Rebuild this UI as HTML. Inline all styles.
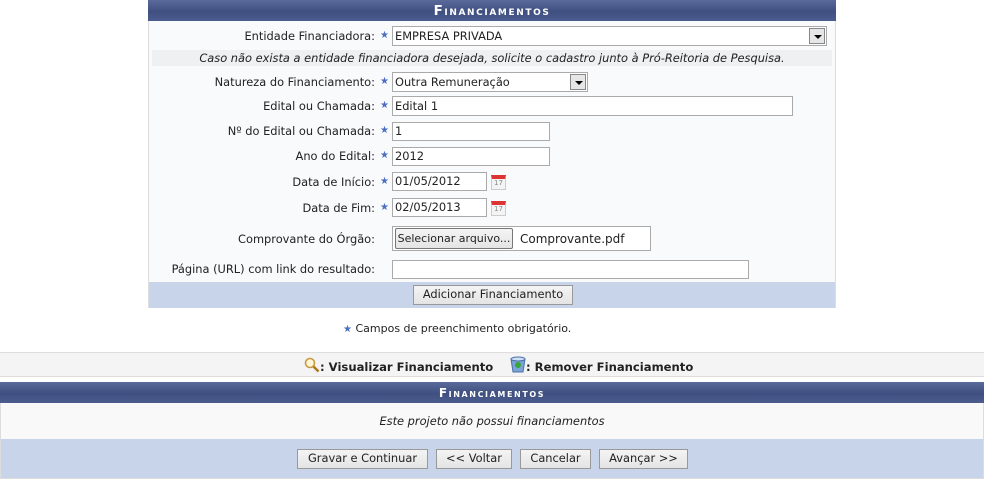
<!DOCTYPE html>
<html><head><meta charset="utf-8"><style>
*{margin:0;padding:0;box-sizing:border-box}
body{width:984px;height:479px;position:relative;background:#fff;font-family:"DejaVu Sans",Verdana,sans-serif;font-size:11.4px;color:#222;overflow:hidden}
.a{position:absolute}
.hdr{background:linear-gradient(#5a6a9a,#3f4f80 55%,#4c5c8e);color:#fff;font-weight:bold;text-align:center;font-variant:small-caps;letter-spacing:1.6px;font-size:13.5px}
.lbl{position:absolute;right:609px;white-space:nowrap;text-align:right}
.star{position:absolute;left:380px;color:#4a6fc2;font-size:10px}
.in{position:absolute;left:392px;background:#fff;border:1px solid #aaa;padding-left:2px;line-height:16px;white-space:nowrap}
.btn{position:absolute;background:linear-gradient(#f4f4f4,#e4e4e4);border:1px solid #999;text-align:center;line-height:17px;white-space:nowrap}
.arr{position:absolute;top:1px;right:1px;width:16px;height:16px;background:#e6e6e6;border:1px solid #888}
.arr:after{content:"";position:absolute;left:4px;top:6px;border-left:4px solid transparent;border-right:4px solid transparent;border-top:4px solid #000}
.cal{position:absolute;left:491px;width:15px;height:15px;background:#f4f4f4;border:1px solid #ccc;border-top:4px solid #d33}
.cal:after{content:"17";position:absolute;left:2px;top:0;font-size:7px;color:#888}
</style></head><body>
<div class="a" style="left:148px;top:0;width:688px;height:308px;background:#f9fafc;border-left:1px solid #ddd;border-right:1px solid #ddd"></div>
<div class="a hdr" style="left:148px;top:0;width:688px;height:21px;line-height:23px">Financiamentos</div>

<div class="lbl" style="top:29px">Entidade Financiadora:</div><div class="star" style="top:30px">★</div>
<div class="in" style="top:26px;width:435px;height:20px;line-height:18px">EMPRESA PRIVADA<span class="arr"></span></div>

<div class="a" style="left:152px;top:50px;width:680px;height:16px;background:#eef0f2;text-align:center;font-style:italic;line-height:17px">Caso não exista a entidade financiadora desejada, solicite o cadastro junto à Pró-Reitoria de Pesquisa.</div>

<div class="lbl" style="top:75px">Natureza do Financiamento:</div><div class="star" style="top:76px">★</div>
<div class="in" style="top:72px;width:196px;height:20px;line-height:18px">Outra Remuneração<span class="arr"></span></div>

<div class="lbl" style="top:99px">Edital ou Chamada:</div><div class="star" style="top:100px">★</div>
<div class="in" style="top:96px;width:401px;height:20px;line-height:18px">Edital 1</div>

<div class="lbl" style="top:124px">Nº do Edital ou Chamada:</div><div class="star" style="top:125px">★</div>
<div class="in" style="top:122px;width:158px;height:19px">1</div>

<div class="lbl" style="top:149px">Ano do Edital:</div><div class="star" style="top:150px">★</div>
<div class="in" style="top:147px;width:158px;height:19px">2012</div>

<div class="lbl" style="top:175px">Data de Início:</div><div class="star" style="top:176px">★</div>
<div class="in" style="top:172px;width:95px;height:19px">01/05/2012</div><div class="cal" style="top:175px"></div>

<div class="lbl" style="top:201px">Data de Fim:</div><div class="star" style="top:202px">★</div>
<div class="in" style="top:198px;width:95px;height:19px">02/05/2013</div><div class="cal" style="top:201px"></div>

<div class="lbl" style="top:232px">Comprovante do Órgão:</div>
<div class="in" style="top:226px;width:259px;height:25px;border-color:#aaa"></div>
<div class="btn" style="left:395px;top:228px;width:118px;height:21px;line-height:19px;border-color:#777;border-radius:2px;font-size:11px">Selecionar arquivo...</div>
<div class="a" style="left:520px;top:232px;font-size:12px">Comprovante.pdf</div>

<div class="lbl" style="top:262px">Página (URL) com link do resultado:</div>
<div class="in" style="top:260px;width:357px;height:19px"></div>

<div class="a" style="left:149px;top:282px;width:686px;height:26px;background:#c8d4ea"></div>
<div class="btn" style="left:413px;top:285px;width:160px;height:20px">Adicionar Financiamento</div>

<div class="a" style="left:343px;top:322px;font-size:11px"><span style="color:#4a6fc2;font-size:10px">★</span> Campos de preenchimento obrigatório.</div>

<div class="a" style="left:0;top:352px;width:984px;height:25px;background:#f4f4f4;border-top:1px solid #ddd;border-bottom:1px solid #ddd"></div>
<div class="a" style="left:304px;top:357px;width:15px;height:15px">
<svg width="16" height="16"><circle cx="6" cy="6" r="4.5" fill="#fff6d8" stroke="#c89a40" stroke-width="1.6"/><line x1="9.5" y1="9.5" x2="14.5" y2="14.5" stroke="#b07820" stroke-width="2.6"/></svg></div>
<div class="a" style="left:320px;top:360px;font-weight:bold;font-size:11.6px">: Visualizar Financiamento</div>
<div class="a" style="left:510px;top:356px;width:16px;height:17px">
<svg width="16" height="17"><path d="M1 3h14l-2 13H3z" fill="#7aa4d8" stroke="#4a6fa8"/><ellipse cx="8" cy="3" rx="7" ry="2" fill="#cfe0f4" stroke="#4a6fa8"/><circle cx="8" cy="9" r="3" fill="#3aa43a"/></svg></div>
<div class="a" style="left:526px;top:360px;font-weight:bold;font-size:11.6px">: Remover Financiamento</div>

<div class="a hdr" style="left:0;top:382px;width:984px;height:21px;line-height:22px;font-size:12px">Financiamentos</div>
<div class="a" style="left:0;top:403px;width:984px;height:76px;border-left:1px solid #ddd;border-right:1px solid #ddd;border-bottom:1px solid #ddd;background:#f9f9f9"></div>
<div class="a" style="left:0;top:414px;width:984px;text-align:center;font-style:italic">Este projeto não possui financiamentos</div>
<div class="a" style="left:1px;top:439px;width:982px;height:39px;background:#c8d4ea"></div>
<div class="btn" style="left:297px;top:449px;width:131px;height:20px">Gravar e Continuar</div>
<div class="btn" style="left:436px;top:449px;width:76px;height:20px">&lt;&lt; Voltar</div>
<div class="btn" style="left:520px;top:449px;width:71px;height:20px">Cancelar</div>
<div class="btn" style="left:599px;top:449px;width:89px;height:20px">Avançar &gt;&gt;</div>
</body></html>
